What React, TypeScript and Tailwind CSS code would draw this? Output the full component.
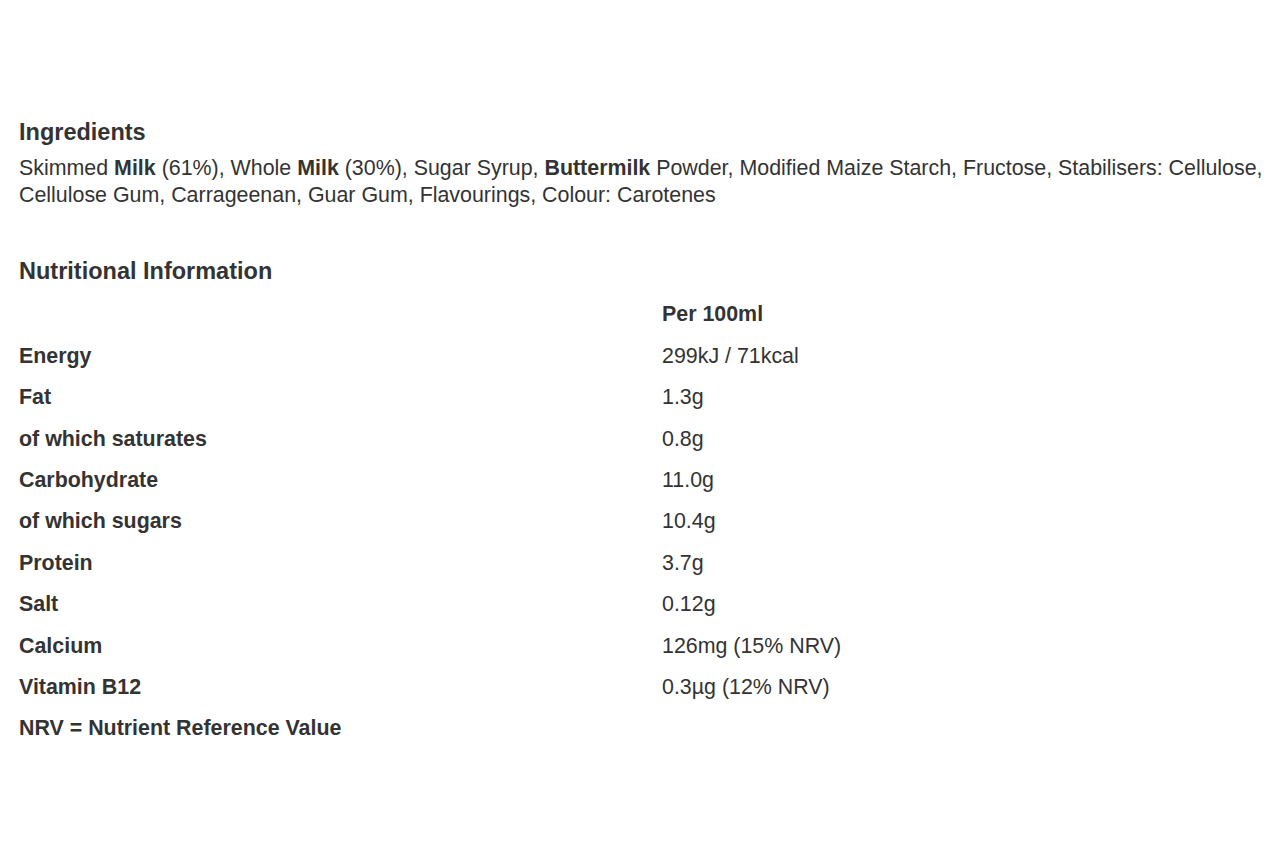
import React from "react";

const rows: [string, string][] = [
  ["Energy", "299kJ / 71kcal"],
  ["Fat", "1.3g"],
  ["of which saturates", "0.8g"],
  ["Carbohydrate", "11.0g"],
  ["of which sugars", "10.4g"],
  ["Protein", "3.7g"],
  ["Salt", "0.12g"],
  ["Calcium", "126mg (15% NRV)"],
  ["Vitamin B12", "0.3µg (12% NRV)"],
];

export default function App() {
  return (
    <div
      className="w-[1280px] h-[853px] bg-white text-[#333333] pl-[19px] pr-[10px] pt-[117px]"
      style={{ fontFamily: '"Liberation Sans", Arial, sans-serif' }}
    >
      <h2 className="text-[23.5px] font-bold leading-[30px]">Ingredients</h2>
      <p className="text-[21.4px] leading-[27px] mt-[7.5px]">
        Skimmed <b>Milk</b> (61%), Whole <b>Milk</b> (30%), Sugar Syrup, <b>Buttermilk</b> Powder, Modified Maize Starch,
        Fructose, Stabilisers: Cellulose, Cellulose Gum, Carrageenan, Guar Gum, Flavourings, Colour: Carotenes
      </p>
      <h2 className="text-[23.5px] font-bold leading-[30px] mt-[47.5px]">Nutritional Information</h2>
      <div className="grid grid-cols-[643px_1fr] text-[21.4px] leading-[41.4px] mt-[8.3px]">
        <div />
        <div className="font-bold">Per 100ml</div>
        {rows.map(([k, v]) => (
          <React.Fragment key={k}>
            <div className="font-bold">{k}</div>
            <div>{v}</div>
          </React.Fragment>
        ))}
        <div className="font-bold col-span-2">NRV = Nutrient Reference Value</div>
      </div>
    </div>
  );
}
